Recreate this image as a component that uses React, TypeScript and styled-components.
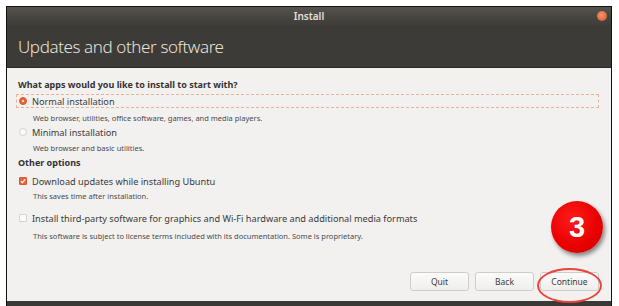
import React from 'react'
import styled, { createGlobalStyle } from 'styled-components'

const Global = createGlobalStyle`
  html, body { margin: 0; padding: 0; background: #fff; }
  body { font-family: 'Noto Sans', 'Open Sans', sans-serif; }
`

const Window = styled.div`
  position: relative;
  margin: 6px 0 0 6px;
  width: 604px;
  height: 299px;
  border: 1px solid #111;
  border-bottom: none;
  display: flex;
  flex-direction: column;
  background: #3c3b37;
  overflow: hidden;
`

const TitleBar = styled.div`
  height: 18px;
  display: flex;
  align-items: center;
  justify-content: center;
  position: relative;
  background: linear-gradient(#57544e, #46443f 60%, #403e3a);
  color: #e4e0d8;
  font-size: 10px;
  font-weight: 600;
`

const CloseBtn = styled.span`
  position: absolute;
  right: 4px;
  top: 4px;
  width: 10px;
  height: 10px;
  border-radius: 50%;
  background: radial-gradient(circle at 45% 40%, #f39a6c, #e0663b 70%, #c2532e);
`

const Header = styled.div`
  height: 42px;
  display: flex;
  align-items: center;
  padding-left: 11px;
  color: #e6e2da;
  font-size: 17px;
  letter-spacing: -0.4px;
  font-weight: 300;
  background: #3d3b37;
  border-bottom: 1px solid #2a2926;
`

const Content = styled.div`
  flex: 1;
  background: #f2f1f0;
  padding: 10px 12px 0 11px;
  display: flex;
  flex-direction: column;
  color: #3c3c3c;
  position: relative;
`

const Heading = styled.div<{ gap?: number }>`
  font-size: 9px;
  font-weight: 700;
  color: #333;
  margin-top: ${p => p.gap ?? 0}px;
  line-height: 13px;
`

const OptionRow = styled.div<{ focus?: boolean; gap?: number }>`
  display: flex;
  align-items: center;
  gap: 5px;
  height: 12px;
  margin-top: ${p => p.gap ?? 0}px;
  padding-left: 2px;
  margin-left: -2px;
  border: 1px dashed ${p => (p.focus ? '#eab09a' : 'transparent')};
  font-size: 9.2px;
  color: #3a3a3a;
`

const Radio = styled.span<{ on?: boolean }>`
  width: 8px;
  height: 8px;
  border-radius: 50%;
  box-sizing: border-box;
  background: ${p => (p.on ? '#e9643a' : '#fafafa')};
  border: 1px solid ${p => (p.on ? '#d85a30' : '#d4d2cf')};
  display: flex;
  align-items: center;
  justify-content: center;
  &::after {
    content: '';
    width: 2px;
    height: 2px;
    border-radius: 50%;
    background: ${p => (p.on ? '#fff' : 'transparent')};
  }
`

const Check = styled.span<{ on?: boolean }>`
  width: 8px;
  height: 8px;
  border-radius: 1px;
  box-sizing: border-box;
  background: ${p => (p.on ? '#e9643a' : '#fafafa')};
  border: 1px solid ${p => (p.on ? '#d85a30' : '#d4d2cf')};
  display: flex;
  align-items: center;
  justify-content: center;
`

const Desc = styled.div<{ gap?: number }>`
  font-size: 7.5px;
  color: #4a4a4a;
  padding-left: 15px;
  margin-top: ${p => p.gap ?? 0}px;
  line-height: 10px;
`

const Footer = styled.div`
  margin-top: auto;
  display: flex;
  justify-content: flex-end;
  gap: 6px;
  padding: 0 0 10px 0;
`

const Button = styled.button`
  width: 59px;
  height: 19px;
  border: 1px solid #cfcdca;
  border-radius: 3px;
  background: linear-gradient(#fbfbfa, #efeeec);
  font-family: inherit;
  font-size: 8.5px;
  color: #3c3c3c;
  padding: 0;
`

const Badge = styled.div`
  position: absolute;
  right: 8px;
  top: 133px;
  width: 52px;
  height: 52px;
  border-radius: 50%;
  background: radial-gradient(circle at 40% 35%, #ff1a1a, #e80000 60%, #c80000);
  box-shadow: 2px 3px 4px rgba(0, 0, 0, 0.45);
  color: #fff;
  font-family: 'Liberation Sans', Arial, sans-serif;
  font-weight: 700;
  font-size: 29px;
  display: flex;
  align-items: center;
  justify-content: center;
`

const Ring = styled.div`
  position: absolute;
  right: 9px;
  bottom: -2px;
  width: 65px;
  height: 35px;
  border-radius: 50%;
  border: 2px solid #e8453c;
  box-sizing: border-box;
`

const BottomStrip = styled.div`
  height: 5px;
  background: #3a3935;
`

export default function App() {
  return (
    <>
      <Global />
      <Window>
        <TitleBar>
          Install
          <CloseBtn />
        </TitleBar>
        <Header>Updates and other software</Header>
        <Content>
          <Heading>What apps would you like to install to start with?</Heading>
          <OptionRow focus gap={3}>
            <Radio on />
            Normal installation
          </OptionRow>
          <Desc gap={5}>Web browser, utilities, office software, games, and media players.</Desc>
          <OptionRow gap={2}>
            <Radio />
            Minimal installation
          </OptionRow>
          <Desc gap={4}>Web browser and basic utilities.</Desc>
          <Heading gap={3}>Other options</Heading>
          <OptionRow gap={5}>
            <Check on>
              <svg width="6" height="6" viewBox="0 0 6 6">
                <path d="M0.8 3.1 L2.4 4.6 L5.2 1.4" stroke="#fff" strokeWidth="1.2" fill="none" />
              </svg>
            </Check>
            Download updates while installing Ubuntu
          </OptionRow>
          <Desc gap={3}>This saves time after installation.</Desc>
          <OptionRow gap={10}>
            <Check />
            Install third-party software for graphics and Wi-Fi hardware and additional media formats
          </OptionRow>
          <Desc gap={6}>This software is subject to license terms included with its documentation. Some is proprietary.</Desc>
          <Footer>
            <Button>Quit</Button>
            <Button>Back</Button>
            <Button>Continue</Button>
          </Footer>
          <Badge>3</Badge>
          <Ring />
        </Content>
        <BottomStrip />
      </Window>
    </>
  )
}
